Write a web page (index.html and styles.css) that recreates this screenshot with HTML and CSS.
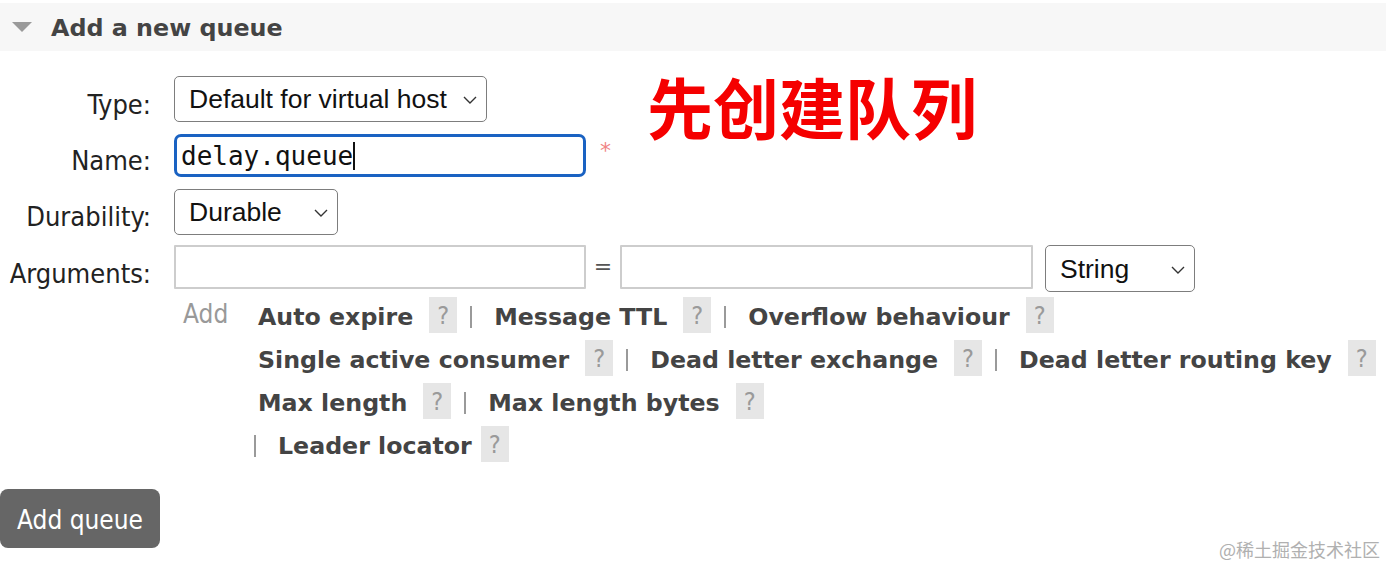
FILE: index.html
```html
<!DOCTYPE html>
<html lang="en">
<head>
<meta charset="utf-8">
<title>Add a new queue</title>
<link rel="stylesheet" href="styles.css">
</head>
<body>
<div class="page">
  <div class="section-head">
    <span class="tri"></span>
    <h2 class="title">Add a new queue</h2>
  </div>

  <div class="form">
    <div class="row row-type">
      <label class="lbl">Type:</label>
      <div class="sel sel-type">
        <select><option>Default for virtual host</option></select>
        <svg class="chev" viewBox="0 0 14 8" width="14" height="8"><polyline points="1,1 7,7 13,1" fill="none" stroke="#333" stroke-width="1.4"/></svg>
      </div>
    </div>

    <div class="row row-name">
      <label class="lbl">Name:</label>
      <div class="name-input"><span class="mono">delay.queue</span><span class="caret"></span></div>
      <span class="req">*</span>
    </div>

    <div class="row row-dur">
      <label class="lbl">Durability:</label>
      <div class="sel sel-dur">
        <select><option>Durable</option></select>
        <svg class="chev" viewBox="0 0 14 8" width="14" height="8"><polyline points="1,1 7,7 13,1" fill="none" stroke="#333" stroke-width="1.4"/></svg>
      </div>
    </div>

    <div class="row row-args">
      <label class="lbl">Arguments:</label>
      <input class="arg" type="text">
      <span class="eq">=</span>
      <input class="arg arg2" type="text">
      <div class="sel sel-str">
        <select><option>String</option></select>
        <svg class="chev" viewBox="0 0 14 8" width="14" height="8"><polyline points="1,1 7,7 13,1" fill="none" stroke="#333" stroke-width="1.4"/></svg>
      </div>
    </div>

    <div class="help">
      <span class="add">Add</span>
      <div class="list">
        <div class="line">
          <span class="opt">Auto expire</span><span class="q">?</span><span class="bar"></span>
          <span class="opt">Message TTL</span><span class="q">?</span><span class="bar"></span>
          <span class="opt">Overflow behaviour</span><span class="q">?</span>
        </div>
        <div class="line">
          <span class="opt">Single active consumer</span><span class="q">?</span><span class="bar"></span>
          <span class="opt">Dead letter exchange</span><span class="q">?</span><span class="bar"></span>
          <span class="opt">Dead letter routing key</span><span class="q">?</span>
        </div>
        <div class="line">
          <span class="opt">Max length</span><span class="q">?</span><span class="bar"></span>
          <span class="opt">Max length bytes</span><span class="q">?</span>
        </div>
        <div class="line line-last">
          <span class="bar bar-first"></span>
          <span class="opt">Leader locator</span><span class="q q-tight">?</span>
        </div>
      </div>
    </div>
  </div>

  <button class="btn">Add queue</button>

  <div class="note">先创建队列</div>
  <div class="wm">@稀土掘金技术社区</div>
</div>
</body>
</html>
```

FILE: styles.css
```css
html, body {
  margin: 0;
  padding: 0;
  background: #fff;
}

.page {
  position: relative;
  width: 1386px;
  height: 566px;
  overflow: hidden;
  font-family: "DejaVu Sans Condensed", "DejaVu Sans", sans-serif;
  color: #222;
}

.section-head {
  margin-top: 3px;
  height: 48px;
  background: #f7f7f7;
  display: flex;
  align-items: center;
  padding-left: 12px;
}

.tri {
  width: 0;
  height: 0;
  border-left: 10px solid transparent;
  border-right: 10px solid transparent;
  border-top: 10px solid #9a9a9a;
  margin-right: 19px;
}

.title {
  margin: 0;
  font-family: "DejaVu Sans", sans-serif;
  font-weight: bold;
  font-size: 23.8px;
  line-height: 28px;
  padding-top: 2px;
  color: #444;
}

.form {
  margin-top: 25px;
}

.row {
  display: flex;
  align-items: flex-start;
}

.row-type { height: 46px; margin-bottom: 12px; }
.row-name { height: 43px; margin-bottom: 12px; }
.row-dur  { height: 46px; margin-bottom: 10px; }
.row-args { height: 47px; }

.lbl {
  width: 151px;
  margin-right: 23px;
  text-align: right;
  font-size: 27px;
  line-height: 30px;
  padding-top: 12px;
  color: #222;
  flex: none;
}
.row-type .lbl { padding-top: 14px; }
.row-dur .lbl { padding-top: 13px; }
.row-args .lbl { padding-top: 14px; }

.sel {
  position: relative;
  flex: none;
}

.sel select {
  appearance: none;
  -webkit-appearance: none;
  display: block;
  width: 100%;
  height: 100%;
  margin: 0;
  box-sizing: border-box;
  border: 1.5px solid #7d7d7d;
  border-radius: 5px;
  background: #fff;
  font-family: "Liberation Sans", Arial, sans-serif;
  font-size: 26.5px;
  color: #111;
  padding: 0 0 0 14px;
}

.chev {
  position: absolute;
  right: 10px;
  top: 50%;
  margin-top: -3px;
  pointer-events: none;
}

.sel-type { width: 313px; height: 46px; }
.sel-dur  { width: 164px; height: 46px; }
.sel-str  { width: 150px; height: 47px; margin-left: 12px; }

.name-input {
  width: 412px;
  height: 43px;
  box-sizing: border-box;
  border: 3px solid #1a62c2;
  border-radius: 7px;
  display: flex;
  align-items: center;
  padding-left: 4px;
  flex: none;
}

.mono {
  font-family: "DejaVu Sans Mono", monospace;
  font-size: 26px;
  color: #111;
  line-height: 30px;
}

.caret {
  width: 1.5px;
  height: 28px;
  background: #111;
}

.req {
  margin-left: 14px;
  margin-top: 4px;
  font-family: "DejaVu Sans", sans-serif;
  font-size: 22px;
  color: #f08585;
}

.arg {
  width: 412px;
  height: 44px;
  box-sizing: border-box;
  border: 2px solid #cdcdcd;
  border-radius: 1px;
  margin: 0;
  padding: 0 4px;
  flex: none;
  background: #fff;
}
.arg2 { width: 413px; }

.eq {
  width: 34px;
  text-align: center;
  font-family: "DejaVu Sans", sans-serif;
  font-size: 22px;
  line-height: 44px;
  color: #555;
  flex: none;
}

.help {
  display: flex;
  align-items: flex-start;
  margin-left: 174px;
  margin-top: 5px;
}

.add {
  width: 75px;
  padding-left: 9px;
  font-size: 26px;
  line-height: 30px;
  padding-top: 2px;
  color: #999;
  flex: none;
}

.list {
  display: flex;
  flex-direction: column;
  gap: 7px;
  flex: none;
}

.line {
  display: flex;
  align-items: flex-start;
  height: 36px;
  white-space: nowrap;
}

.opt {
  font-family: "DejaVu Sans", sans-serif;
  font-weight: bold;
  font-size: 23.7px;
  color: #444;
  line-height: 36px;
  padding-top: 2px;
  white-space: nowrap;
  flex: none;
}

.q {
  width: 28px;
  height: 36px;
  background: #e6e6e6;
  color: #9a9a9a;
  text-align: center;
  font-size: 25px;
  line-height: 38px;
  margin-left: 16px;
  flex: none;
}
.q-tight { margin-left: 9px; }

.bar {
  width: 2px;
  height: 22px;
  background: #9a9a9a;
  margin: 9px 22px 0 13px;
  flex: none;
}
.bar-first { margin-left: -4px; }

.btn {
  display: block;
  margin: 27px 0 0 0;
  width: 160px;
  height: 59px;
  border: none;
  border-radius: 8px;
  background: #666;
  color: #fff;
  font-family: "DejaVu Sans Condensed", "DejaVu Sans", sans-serif;
  font-size: 26px;
  padding: 2px 0 0 0;
}

.note {
  position: absolute;
  left: 647px;
  top: 72px;
  font-family: "Noto Sans CJK SC", sans-serif;
  font-weight: bold;
  font-size: 66px;
  line-height: 1;
  color: #f50000;
  letter-spacing: 0;
}

.wm {
  position: absolute;
  right: 6px;
  top: 537px;
  font-family: "Noto Sans CJK SC", sans-serif;
  font-size: 18px;
  line-height: 24px;
  color: #b0b0b0;
}
```
